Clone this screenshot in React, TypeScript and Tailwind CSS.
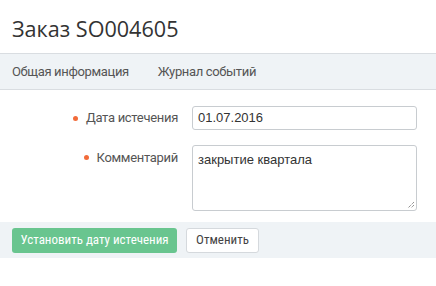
export default function App() {
  return (
    <div className="w-[436px] h-[286px] bg-white font-['Open_Sans',sans-serif] text-[#333]">
      <div className="h-[53px] px-[12px] pt-[14px]">
        <h1 className="text-[21.6px] leading-[30px] text-[#333]">Заказ SO004605</h1>
      </div>
      <div className="h-[37px] bg-[#eff3f6] border-y border-[#d9dde1] flex items-center px-[12px] gap-[29px] text-[13px] tracking-[-0.35px] text-[#555] font-['Roboto',sans-serif]">
        <span>Общая информация</span>
        <span>Журнал событий</span>
      </div>
      <div className="pt-[16px] pb-[10px] font-['Roboto',sans-serif]">
        <div className="flex items-center h-[24px]">
          <div className="w-[180px] flex justify-end items-center pr-[2px] text-[13px] tracking-[-0.3px] text-[#555]">
            <span className="w-[5px] h-[5px] rounded-full bg-[#f26b3a] mr-[8px]" />
            <span>Дата истечения</span>
          </div>
          <div className="ml-[12px] w-[225px] h-[24px] border border-[#c8ccd0] rounded-[3px] flex items-center px-[5px] font-['Liberation_Sans',sans-serif] text-[13px] text-[#333]">
            01.07.2016
          </div>
        </div>
        <div className="flex items-start mt-[15px]">
          <div className="w-[180px] flex justify-end items-center pr-[2px] pt-[3px] text-[13px] tracking-[-0.3px] text-[#555]">
            <span className="w-[5px] h-[5px] rounded-full bg-[#f26b3a] mr-[8px]" />
            <span>Комментарий</span>
          </div>
          <div className="ml-[12px] relative w-[225px] h-[66px] border border-[#c8ccd0] rounded-[3px] px-[5px] pt-[4px] font-['Liberation_Sans',sans-serif] text-[13px] text-[#333]">
            закрытие квартала
            <svg className="absolute right-[1px] bottom-[1px]" width="8" height="8" viewBox="0 0 8 8">
              <path d="M7 1 L1 7 M7 4 L4 7" stroke="#666" strokeWidth="1" strokeDasharray="1 1" />
            </svg>
          </div>
        </div>
      </div>
      <div className="h-[36px] mt-[1px] bg-[#eff3f6] flex items-center px-[12px] gap-[9px]">
        <button className="h-[25px] px-[8.5px] rounded-[3px] bg-[#69c58f] text-white text-[13px] font-['Roboto',sans-serif] font-stretch-condensed">
          Установить дату истечения
        </button>
        <button className="h-[25px] px-[9px] rounded-[3px] bg-white border border-[#d5d9dd] text-[#444] text-[13px] font-['Roboto',sans-serif] font-stretch-condensed">
          Отменить
        </button>
      </div>
    </div>
  );
}
